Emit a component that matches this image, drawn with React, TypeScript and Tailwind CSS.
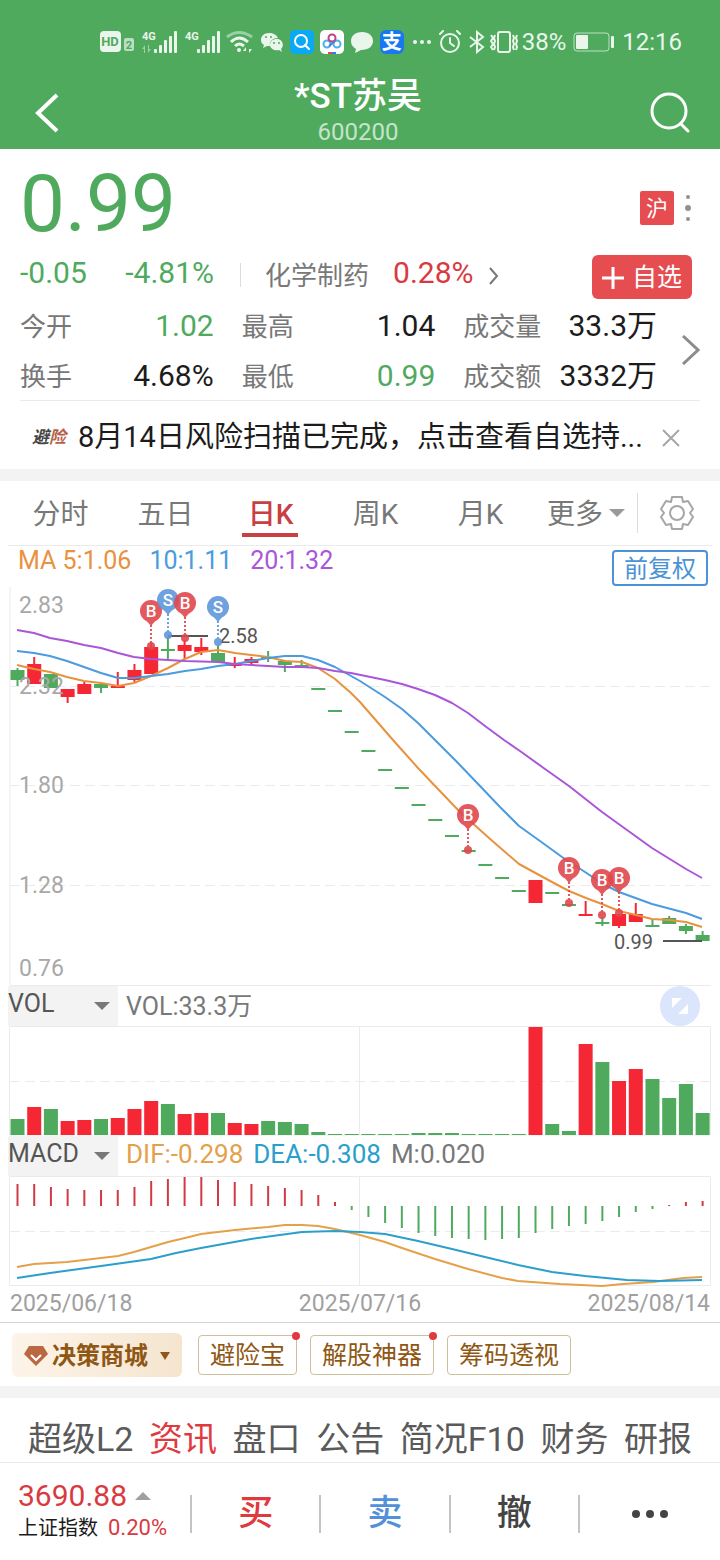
import React, { useState } from 'react';

const RED = '#f52735';
const GREEN = '#4faa5e';
const GRID = '#ebebeb';

// [top, bottom, high, low, colour] for every trading day
type Candle = [number, number, number, number, 'r' | 'g'];

const CANDLES: Candle[] = [
  [670, 680, 668, 686, 'g'],
  [664, 684, 657, 684, 'r'],
  [674, 688, 674, 688, 'g'],
  [689, 697, 689, 703, 'r'],
  [684, 694, 682, 694, 'r'],
  [684, 688, 684, 693, 'g'],
  [686, 688, 672, 688, 'r'],
  [670, 680, 664, 682, 'r'],
  [647, 674, 643, 674, 'r'],
  [649, 651, 637, 659, 'g'],
  [645, 651, 640, 659, 'r'],
  [647, 652, 638, 655, 'r'],
  [653, 662, 645, 662, 'g'],
  [664, 666, 657, 668, 'r'],
  [659, 663, 657, 664, 'r'],
  [657, 659, 651, 662, 'g'],
  [661, 665, 660, 672, 'g'],
  [665, 667, 660, 668, 'g'],
  [688, 690, 688, 690, 'g'],
  [710, 712, 710, 712, 'g'],
  [731, 733, 731, 733, 'g'],
  [750, 752, 750, 752, 'g'],
  [769, 771, 769, 771, 'g'],
  [787, 789, 787, 789, 'g'],
  [804, 806, 804, 806, 'g'],
  [819, 821, 819, 821, 'g'],
  [835, 837, 835, 837, 'g'],
  [850, 852, 850, 852, 'g'],
  [864, 866, 864, 866, 'g'],
  [877, 879, 877, 879, 'g'],
  [890, 892, 890, 892, 'g'],
  [880, 903, 880, 903, 'r'],
  [892, 894, 892, 894, 'g'],
  [904, 906, 904, 906, 'g'],
  [914, 916, 901, 916, 'r'],
  [922, 924, 917, 926, 'g'],
  [914, 926, 914, 928, 'r'],
  [914, 922, 903, 922, 'r'],
  [925, 927, 920, 927, 'g'],
  [918, 924, 916, 924, 'g'],
  [926, 931, 924, 934, 'g'],
  [935, 941, 931, 941, 'g'],
];

const VOLUMES = [
  16, 28, 26, 14, 15, 16, 17, 26, 34, 31, 21, 22, 22, 12, 11, 14, 13, 11, 3, 1, 1,
  1, 1, 1, 2, 2, 2, 1, 1, 1, 1, 108, 11, 4, 91, 73, 54, 66, 56, 37, 51, 22,
];

const MACD = [
  22, 22, 19, 17, 16, 16, 16, 19, 25, 27, 29, 29, 26, 24, 22, 20, 18, 16, 11, 4, -4,
  -11, -17, -22, -27, -30, -32, -33, -34, -33, -32, -27, -23, -20, -18, -15, -11, -6, -3, 1, 4, 5,
];

const MA5 =
  '17,665 34,669 50,672 67,677 84,681 101,683 118,686 134,683 151,676 168,668 185,659 201,652 218,650 235,653 251,655 268,657 285,661 302,662 318,668 335,679 351,693 360,702 393,740 418,768 437,788 460,812 489,838 519,864 552,882 569,891 586,898 602,904 619,911 636,915 652,919 669,920 686,922 702,927';
const MA10 =
  '17,651 34,653 50,656 67,661 84,667 101,673 118,678 134,678 151,676 168,674 185,671 201,669 218,666 235,664 251,661 268,658 285,656 302,656 318,660 335,667 360,681 385,697 402,709 418,723 435,740 457,762 480,786 500,807 519,826 540,841 562,857 585,872 603,884 619,892 652,904 686,913 702,919';
const MA20 =
  '17,630 34,633 50,638 67,641 84,645 101,648 118,653 134,657 151,659 185,661 218,662 235,664 268,666 285,667 302,667 318,668 335,671 351,673 385,680 402,684 418,689 435,695 452,703 468,713 485,726 504,740 520,751 545,769 569,786 602,812 627,830 652,848 686,869 702,878';
const DIF =
  '17,1267 34,1264 67,1262 84,1260 101,1258 118,1256 134,1252 151,1247 168,1242 185,1238 201,1234 235,1230 268,1227 285,1225 302,1225 318,1226 335,1229 360,1235 385,1242 402,1248 435,1259 468,1269 502,1278 518,1281 560,1284 602,1286 623,1284 653,1282 683,1278 702,1277';
const DEA =
  '17,1278 50,1273 101,1266 151,1259 176,1253 201,1248 251,1239 302,1232 335,1231 360,1232 385,1234 418,1241 452,1249 485,1257 518,1265 552,1272 585,1276 627,1280 660,1281 702,1280';

const MARKS: { kind: 'B' | 'S'; x: number; y: number }[] = [
  { kind: 'B', x: 151, y: 611 },
  { kind: 'S', x: 168, y: 600 },
  { kind: 'B', x: 185, y: 603 },
  { kind: 'S', x: 218, y: 607 },
  { kind: 'B', x: 468, y: 815 },
  { kind: 'B', x: 569, y: 868 },
  { kind: 'B', x: 602, y: 880 },
  { kind: 'B', x: 619, y: 878 },
];

const dayX = (i: number) => 17.5 + i * 16.71;

function Caret({ className }: { className?: string }) {
  return (
    <svg viewBox="0 0 16 8" className={className} fill="currentColor">
      <path d="M0 0h16L8 8z" />
    </svg>
  );
}

function Signal({ arrows }: { arrows?: boolean }) {
  return (
    <svg viewBox="0 0 37 28" className="h-7 w-[37px]" fill="#eaf6ec">
      <text x="0" y="12" fontSize="11" fontWeight="700">4G</text>
      {arrows && (
        <path d="M3 17l-3 4h2v4h1zM6 25l3-4H7v-4H6z" opacity="0.5" />
      )}
      <rect x="12" y="21" width="3" height="4" rx="1" />
      <rect x="17" y="17" width="3" height="8" rx="1" />
      <rect x="22" y="12" width="3" height="13" rx="1" />
      <rect x="27" y="8" width="3" height="17" rx="1" />
      <rect x="32" y="3" width="3" height="22" rx="1" />
    </svg>
  );
}

function StatusBar() {
  return (
    <div className="flex h-[76px] items-center justify-end pt-2 pr-[38px] text-[#eaf6ec]">
      <svg viewBox="0 0 36 24" className="h-6 w-9">
        <rect x="0" y="1" width="21" height="21" rx="4" fill="#eaf6ec" />
        <text x="10" y="16" fontSize="13" fontWeight="700" textAnchor="middle" fill={GREEN}>HD</text>
        <rect x="24" y="8" width="10" height="13" rx="2" fill="#b9dfc0" />
        <text x="29" y="19" fontSize="11" fontWeight="700" textAnchor="middle" fill={GREEN}>2</text>
      </svg>
      <div className="ml-1.5 flex gap-1.5">
        <Signal arrows />
        <Signal />
      </div>
      <svg viewBox="0 0 28 24" className="ml-1 h-6 w-7" fill="none" stroke="#eaf6ec" strokeWidth="3">
        <path d="M1 7Q13-2 26 7" opacity="0.5" />
        <path d="M5 12Q13 4 22 12M9 16Q13 12 18 16" />
        <circle cx="13" cy="20" r="2" fill="#eaf6ec" stroke="none" />
        <path d="M20 17l-3 4h3zM23 23l3-4h-3z" fill="#eaf6ec" stroke="none" />
      </svg>
      <svg viewBox="0 0 24 24" className="ml-1.5 h-6 w-6" fill="#eaf6ec">
        <path d="M9 3C4 3 1 6 1 10c0 2 1 4 3 5l-1 3 4-2h3c-1-5 3-8 8-8-1-3-5-5-9-5z" />
        <path d="M17 9c-4 0-7 2-7 6s5 6 9 5l3 2-1-3c4-4 1-10-4-10z" />
        <circle cx="6" cy="7" r="1" fill={GREEN} />
        <circle cx="11" cy="7" r="1" fill={GREEN} />
        <circle cx="14" cy="13" r="1" fill={GREEN} />
        <circle cx="19" cy="13" r="1" fill={GREEN} />
      </svg>
      <svg viewBox="0 0 24 24" className="ml-1.5 h-6 w-6" fill="none">
        <rect width="24" height="24" rx="5" fill="#0aa9f5" />
        <circle cx="11" cy="11" r="6" stroke="#fff" strokeWidth="2" />
        <path d="M15 15l4 4" stroke="#fff" strokeWidth="2" strokeLinecap="round" />
      </svg>
      <svg viewBox="0 0 24 24" className="ml-1.5 h-6 w-6" fill="none" strokeWidth="2">
        <rect width="24" height="24" rx="5" fill="#fff" />
        <circle cx="7" cy="14" r="3.5" stroke="#48b0ee" />
        <circle cx="17" cy="14" r="3.5" stroke="#48b0ee" />
        <circle cx="12" cy="8" r="3.5" stroke="#c0447e" />
        <path d="M9 16l6-5" stroke="#5277dd" />
        <path d="M8 23h4" stroke="#e5484d" />
        <path d="M12 23h4" stroke="#3b7ae6" />
      </svg>
      <svg viewBox="0 0 24 24" className="ml-1.5 h-6 w-6" fill="#eaf6ec">
        <path d="M12 2C5 2 1 6 1 11c0 4 2 6 5 8l-1 4 6-3c8 0 12-4 12-9s-4-9-11-9z" />
      </svg>
      <span className="ml-1.5 flex h-6 w-6 items-center justify-center rounded-md bg-[#1878f2] text-xl font-bold text-white">支</span>
      <svg viewBox="0 0 20 24" className="ml-2 h-6 w-5" fill="currentColor">
        <circle cx="3" cy="12" r="2" />
        <circle cx="10" cy="12" r="2" />
        <circle cx="17" cy="12" r="2" />
      </svg>
      <svg viewBox="0 0 24 24" className="ml-1.5 h-6 w-6" fill="none" stroke="currentColor" strokeWidth="2" strokeLinecap="round">
        <circle cx="12" cy="13" r="9" />
        <path d="M12 8v5l4 3M2 4l3-3M22 4l-3-3" />
      </svg>
      <svg viewBox="0 0 18 24" className="ml-1.5 h-6 w-[18px]" fill="none" stroke="currentColor" strokeWidth="2">
        <path d="M2 7l13 10-6 5V2l6 5L2 17" />
      </svg>
      <svg viewBox="1 0 28 24" className="ml-1 h-6 w-7" fill="none" stroke="currentColor" strokeWidth="2">
        <rect x="9" y="2" width="12" height="20" rx="2" />
        <path d="M2 5l2 3-2 3 2 3-2 3 2 3M6 5l-1 3 1 3-1 3 1 3-1 3M24 5l1 3-1 3 1 3-1 3 1 3M28 5l-1 3 1 3-1 3 1 3-1 3" />
      </svg>
      <span className="ml-1 text-2xl">38%</span>
      <svg viewBox="0 0 42 22" className="ml-1.5 h-[22px] w-[42px]" fill="currentColor">
        <rect x="2" y="2" width="35" height="18" rx="3" fill="none" stroke="currentColor" strokeOpacity="0.7" />
        <rect x="4" y="4" width="12" height="14" rx="1" />
        <rect x="39" y="5" width="3" height="12" rx="1" />
      </svg>
      <span className="ml-2 text-2xl">12:16</span>
    </div>
  );
}

function Stat({ label, value, className }: { label: string; value: string; className?: string }) {
  return (
    <div className="flex items-center justify-between">
      <span className="pt-1 text-[26px] text-[#787878]">{label}</span>
      <span className={`text-[30px] ${className ?? 'text-[#1c1c1c]'}`}>{value}</span>
    </div>
  );
}

function Quote() {
  return (
    <section className="px-5">
      <div className="flex h-[106px] items-center justify-between">
        <div className="pt-1 text-[80px] leading-none text-[#4faa5e]">0.99</div>
        <div className="flex items-center gap-2.5 pt-3 pr-2">
          <span className="flex h-[34px] w-[34px] items-center justify-center rounded-xs bg-[#e54d51] text-[22px] text-white">沪</span>
          <button aria-label="更多操作">
            <svg viewBox="0 0 8 28" className="h-7 w-2" fill="#909090">
              <circle cx="4" cy="3" r="2" />
              <circle cx="4" cy="14" r="3" />
              <circle cx="4" cy="25" r="2" />
            </svg>
          </button>
        </div>
      </div>

      <div className="flex h-[45px] items-start">
        <div className="flex w-[194px] justify-between text-[30px] leading-9 text-[#4faa5e]">
          <span>-0.05</span>
          <span>-4.81%</span>
        </div>
        <span className="mt-2 ml-[26px] h-6 w-px bg-[#dcdcdc]" />
        <a href="#sector" className="ml-6 flex items-start">
          <span className="text-[26px] leading-[42px] text-[#787878]">化学制药</span>
          <span className="ml-6 text-[30px] leading-9 text-[#d93a40]">0.28%</span>
          <svg viewBox="0 0 10 18" className="mt-3 ml-4 h-[18px] w-2.5" fill="none" stroke="#787878" strokeWidth="2">
            <path d="M1 1l7 8-7 8" />
          </svg>
        </a>
        <button className="mr-2 ml-auto flex h-11 w-[100px] items-center justify-center gap-2 rounded-md bg-[#e54d51] pt-0.5 text-[25px] text-white">
          <svg viewBox="0 0 22 22" className="h-[22px] w-[22px]" stroke="#fff" strokeWidth="3">
            <path d="M0 11h22M11 0v22" />
          </svg>
          自选
        </button>
      </div>

      <div className="flex items-center justify-between border-b border-[#ebebeb]">
        <div className="grid w-[637px] auto-rows-[50px] grid-cols-3 gap-x-7">
          <Stat label="今开" value="1.02" className="text-[#4faa5e]" />
          <Stat label="最高" value="1.04" />
          <Stat label="成交量" value="33.3万" />
          <Stat label="换手" value="4.68%" />
          <Stat label="最低" value="0.99" className="text-[#4faa5e]" />
          <Stat label="成交额" value="3332万" />
        </div>
        <button aria-label="详细行情">
          <svg viewBox="0 0 18 30" className="h-[30px] w-[18px]" fill="none" stroke="#8c8c8c" strokeWidth="3">
            <path d="M1 1l15 14L1 29" />
          </svg>
        </button>
      </div>

      <div className="flex h-[68px] items-center pt-1.5">
        <span className="ml-3 text-[17px] font-bold text-[#444] italic">
          避<span className="text-[#b5604a]">险</span>
        </span>
        <a href="#scan" className="ml-3 truncate text-[29px] text-[#1c1c1c]">
          8月14日风险扫描已完成，点击查看自选持...
        </a>
        <button aria-label="关闭" className="mr-5 ml-auto">
          <svg viewBox="0 0 18 18" className="h-[18px] w-[18px]" stroke="#a6a6a6" strokeWidth="2">
            <path d="M1 1l16 16M17 1L1 17" />
          </svg>
        </button>
      </div>
    </section>
  );
}

function PeriodTabs() {
  const [active, setActive] = useState('日K');

  return (
    <div className="mr-2 ml-2 flex h-[65px] border-b border-[#ebebeb] text-[28px] text-[#787878]">
      <div className="grid flex-1 grid-cols-5">
        {['分时', '五日', '日K', '周K', '月K'].map(name => (
          <button
            key={name}
            onClick={() => setActive(name)}
            className={`flex flex-col items-center ${active === name ? 'font-medium text-[#c93f42]' : ''}`}
          >
            <span className="h-[52px] leading-[68px]">{name}</span>
            {active === name && <span className="h-1 w-14 bg-[#c93f42]" />}
          </button>
        ))}
      </div>
      <button className="ml-3.5 flex gap-1.5 leading-[68px]">
        更多
        <Caret className="h-2 w-4 self-center text-[#9a9a9a]" />
      </button>
      <span className="ml-3 h-10 w-px self-center bg-[#dcdcdc]" />
      <button aria-label="设置" className="mr-[17px] ml-[21px]">
        <svg viewBox="-18 -18 36 36" className="h-9 w-9" fill="none" stroke="#a6a6a6" strokeWidth="2" strokeLinejoin="round">
          <path d="M-5-16H5L6-11L11-12L16-4L13 0L16 4L11 12L6 11L5 16H-5L-6 11L-11 12L-16 4L-13 0L-16-4L-11-12L-6-11Z" />
          <circle r="7" />
        </svg>
      </button>
    </div>
  );
}

function PriceChart() {
  return (
    <svg viewBox="0 585 720 401" className="block w-full" fill="none">
      <path d="M10 587V985" stroke={GRID} strokeWidth="1" />
      <path d="M10 985.5H711" stroke={GRID} />
      {[686.5, 785.5, 885.5].map(y => (
        <path key={y} d={`M10 ${y}H711`} stroke={GRID} strokeDasharray="10 5" />
      ))}
      {CANDLES.map(([top, bottom, high, low, tone], i) => (
        <g key={i} fill={tone === 'r' ? RED : GREEN}>
          <rect x={dayX(i) - 7} y={top} width="14" height={bottom - top} />
          <rect x={dayX(i) - 1} y={high} width="2" height={low - high} />
        </g>
      ))}
      <g fontSize="23" fill="#a8a8a8">
        <text x="19" y="613">2.83</text>
        <text x="19" y="694">2.32</text>
        <text x="19" y="793">1.80</text>
        <text x="19" y="893">1.28</text>
        <text x="19" y="976">0.76</text>
      </g>
      <g strokeWidth="2" strokeLinejoin="round">
        <polyline points={MA5} stroke="#e8923f" />
        <polyline points={MA10} stroke="#4a9be0" />
        <polyline points={MA20} stroke="#a956d8" />
      </g>
      <path d="M168 636H208M663 941H702" stroke="#555" strokeWidth="2" />
      <g fontSize="20" fill="#555">
        <text x="219" y="643">2.58</text>
        <text x="614" y="949">0.99</text>
      </g>
      {MARKS.map(({ kind, x, y }) => {
        const tone = kind === 'B' ? '#e0484c' : '#5f97da';
        return (
          <g key={x} opacity="0.9">
            <path d={`M${x} ${y + 14}V${y + 32}`} stroke={tone} strokeWidth="2" strokeDasharray="2 2" />
            <path d={`M${x - 6} ${y + 8}L${x} ${y + 15}L${x + 6} ${y + 8}Z`} fill={tone} />
            <circle cx={x} cy={y} r="11" fill={tone} />
            <circle cx={x} cy={y + 35} r="4" fill={tone} />
            <text x={x} y={y + 6} fontSize="17" fontWeight="500" textAnchor="middle" fill="#fff">{kind}</text>
          </g>
        );
      })}
    </svg>
  );
}

function IndicatorSelect({ value, label }: { value: string; label: string }) {
  return (
    <div className="relative w-[110px] bg-[#f3f3f3]">
      <select
        aria-label={label}
        defaultValue={value}
        className="block h-9 w-full appearance-none bg-transparent text-[25px] leading-9 text-[#555]"
      >
        <option>{value}</option>
      </select>
      <Caret className="pointer-events-none absolute top-4 right-2 h-2 w-4 text-[#787878]" />
    </div>
  );
}

function VolumeChart() {
  return (
    <svg viewBox="0 1026 720 110" className="block w-full" fill="none">
      <path d="M9.5 1026.5H710.5V1135H9.5ZM359.5 1026V1135" stroke={GRID} />
      <path d="M10 1081.5H710" stroke={GRID} strokeDasharray="10 5" />
      {VOLUMES.map((h, i) => (
        <rect key={i} x={dayX(i) - 7} y={1135 - h} width="14" height={h} fill={CANDLES[i][4] === 'r' ? RED : GREEN} />
      ))}
    </svg>
  );
}

function MacdChart() {
  return (
    <svg viewBox="0 1176 720 111" className="block w-full" fill="none">
      <path d="M9.5 1176.5H710.5V1285.5H9.5ZM359.5 1176V1285" stroke={GRID} />
      <path d="M10 1231.5H710" stroke={GRID} strokeDasharray="10 5" />
      {MACD.map((v, i) => (
        <path key={i} d={`M${dayX(i)} 1206V${1206 - v}`} stroke={v > 0 ? '#cf3a44' : GREEN} strokeWidth="2" />
      ))}
      <polyline points={DIF} stroke="#e5a04a" strokeWidth="2" />
      <polyline points={DEA} stroke="#2b9fcb" strokeWidth="2" />
    </svg>
  );
}

function ChartPanel() {
  return (
    <section>
      <PeriodTabs />
      <div className="flex h-[39px] items-start pr-3 pl-[18px] text-[25px] leading-[30px]">
        <span className="text-[#e8923f]">MA 5:1.06</span>
        <span className="ml-[18px] text-[#4a9be0]">10:1.11</span>
        <span className="ml-[18px] text-[#a956d8]">20:1.32</span>
        <button className="mt-1 ml-auto h-9 w-24 rounded-sm border-2 border-[#4a93d6] text-2xl leading-[34px] text-[#4a93d6]">
          前复权
        </button>
      </div>
      <PriceChart />
      <div className="flex h-10 pr-5 pl-2">
        <IndicatorSelect label="副图一" value="VOL" />
        <span className="ml-2 text-[25px] leading-[42px] text-[#787878]">VOL:33.3万</span>
        <button aria-label="全屏" className="ml-auto">
          <svg viewBox="0 0 40 40" className="h-10 w-10">
            <circle cx="20" cy="20" r="20" fill="#dbe5fc" />
            <path d="M12 12h10L12 22zM28 28H18L28 18z" fill="#fff" />
          </svg>
        </button>
      </div>
      <VolumeChart />
      <div className="flex h-10 gap-2 pl-2 text-[26px] leading-9">
        <IndicatorSelect label="副图二" value="MACD" />
        <span className="text-[#e5a04a]">DIF:-0.298</span>
        <span className="ml-0.5 text-[#2b9fcb]">DEA:-0.308</span>
        <span className="ml-0.5 text-[#787878]">M:0.020</span>
      </div>
      <MacdChart />
      <div className="flex h-9 justify-between border-b border-[#d4d4d4] px-2.5 text-[23px] leading-[34px] text-[#a0a0a0]">
        <span>2025/06/18</span>
        <span>2025/07/16</span>
        <span>2025/08/14</span>
      </div>
    </section>
  );
}

function Tool({ name, dot }: { name: string; dot?: boolean }) {
  return (
    <button className="relative h-10 rounded-sm border border-[#cfc09c] px-[11px] text-[25px] leading-10 text-[#8f5714]">
      {name}
      {dot && <span className="absolute -top-1 -right-1 h-2 w-2 rounded-full bg-[#e0393e]" />}
    </button>
  );
}

function Tools() {
  return (
    <div className="flex h-[63px] items-center gap-[13px] px-3">
      <button className="mr-[3px] flex h-11 w-[170px] items-center justify-center rounded-md bg-linear-to-r from-[#fdf4e9] to-[#f5e5cf] pt-0.5 text-2xl font-bold text-[#8f5714]">
        <svg viewBox="0 0 24 20" className="mr-1 h-5 w-6">
          <path d="M5 0h14l5 8-12 12L0 8z" fill="#b9683f" />
          <path d="M7 9l5 5 5-5" fill="none" stroke="#fff" strokeWidth="2" />
        </svg>
        决策商城
        <svg viewBox="0 0 10 8" className="ml-3 h-2 w-2.5" fill="currentColor">
          <path d="M0 0h10L5 8z" />
        </svg>
      </button>
      <Tool name="避险宝" dot />
      <Tool name="解股神器" dot />
      <Tool name="筹码透视" />
    </div>
  );
}

function InfoTabs() {
  const [active, setActive] = useState('资讯');

  return (
    <nav className="flex h-[65px] items-end justify-between border-b border-[#ebebeb] px-7 text-[34px] leading-[46px] text-[#5a5a5a]">
      {['超级L2', '资讯', '盘口', '公告', '简况F10', '财务', '研报'].map(name => (
        <button key={name} onClick={() => setActive(name)} className={active === name ? 'text-[#e0393e]' : ''}>
          {name}
        </button>
      ))}
    </nav>
  );
}

function TradeBar() {
  return (
    <footer className="flex h-[97px] items-center">
      <a href="#index" className="w-[190px] pl-[18px] whitespace-nowrap">
        <div className="flex items-center gap-2 text-[30px] leading-8 text-[#d93a40]">
          3690.88
          <Caret className="h-2 w-4 rotate-180 text-[#a0a0a0]" />
        </div>
        <div className="flex items-baseline gap-2.5 text-xl leading-8 text-[#1c1c1c]">
          上证指数
          <span className="text-[22px] text-[#d93a40]">0.20%</span>
        </div>
      </a>
      <div className="grid h-[34px] flex-1 grid-cols-[1fr_1fr_1fr_142px] text-[35px] leading-[38px] font-medium">
        <button className="border-l-2 border-[#c4c4c4] text-[#e0393e]">买</button>
        <button className="border-l-2 border-[#c4c4c4] text-[#5490d8]">卖</button>
        <button className="border-l-2 border-[#c4c4c4] text-[#444]">撤</button>
        <button aria-label="更多" className="flex items-center justify-center border-l-2 border-[#c4c4c4]">
          <svg viewBox="0 0 36 8" className="h-2 w-9" fill="#444">
            <circle cx="4" cy="4" r="4" />
            <circle cx="18" cy="4" r="4" />
            <circle cx="32" cy="4" r="4" />
          </svg>
        </button>
      </div>
    </footer>
  );
}

export default function App() {
  return (
    <div className="w-full bg-white font-['Roboto','Noto_Sans_CJK_SC',sans-serif]">
      <header className="bg-[#4faa5e] text-white">
        <StatusBar />
        <div className="flex h-[73px] items-center justify-between px-7">
          <button aria-label="返回">
            <svg viewBox="0 0 40 40" className="h-10 w-10" fill="none" stroke="#fff" strokeWidth="4">
              <path d="M29 2L10 20l19 18" />
            </svg>
          </button>
          <div className="text-center">
            <h1 className="text-[35px] leading-[38px] font-medium">*ST苏吴</h1>
            <p className="text-2xl leading-8 text-[#c6e4cb]">600200</p>
          </div>
          <button aria-label="搜索">
            <svg viewBox="0 0 44 44" className="h-11 w-11" fill="none" stroke="#fff" strokeWidth="3" strokeLinecap="round">
              <circle cx="21" cy="20" r="17" />
              <path d="M33 33l7 7" />
            </svg>
          </button>
        </div>
      </header>
      <Quote />
      <div className="h-3 bg-[#f3f3f3]" />
      <ChartPanel />
      <Tools />
      <div className="h-3 bg-[#f3f3f3]" />
      <InfoTabs />
      <TradeBar />
    </div>
  );
}
